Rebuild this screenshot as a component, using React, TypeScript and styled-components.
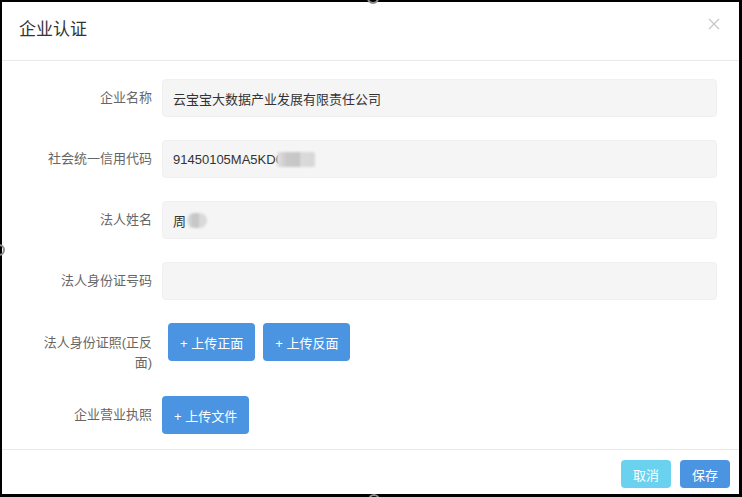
import React from 'react';
import styled, { createGlobalStyle } from 'styled-components';

const GlobalStyle = createGlobalStyle`
  html, body {
    margin: 0;
    padding: 0;
    background: #000;
  }
  body {
    font-family: "Liberation Sans", "Noto Sans CJK SC", sans-serif;
  }
`;

const Frame = styled.div`
  padding: 2px 3px 3px 2px;
`;

const Modal = styled.div`
  width: 737px;
  height: 492px;
  background: #fff;
  display: flex;
  flex-direction: column;
  box-sizing: border-box;
`;

const Header = styled.div`
  height: 59px;
  box-sizing: border-box;
  border-bottom: 1px solid #e9e9e9;
  padding: 16px 19px 0 17px;
  display: flex;
  justify-content: space-between;
  align-items: flex-start;
`;

const Title = styled.h3`
  margin: 0;
  font-size: 17px;
  line-height: 24px;
  font-weight: normal;
  color: #333;
`;

const Close = styled.button`
  border: none;
  background: none;
  padding: 0;
  width: 12px;
  height: 12px;
  display: flex;
  cursor: pointer;
`;

const Body = styled.div`
  height: 388px;
  box-sizing: border-box;
  padding: 18px 22px 0 0;
  display: flex;
  flex-direction: column;
  gap: 23px;
`;

const Row = styled.div<{ $align?: string }>`
  display: grid;
  grid-template-columns: 150px 1fr;
  column-gap: 10px;
  align-items: ${({ $align }) => $align || 'center'};
`;

const Label = styled.div<{ $top?: number }>`
  justify-self: end;
  width: 116px;
  text-align: right;
  font-size: 13px;
  line-height: 20px;
  color: #666;
  padding-top: ${({ $top }) => ($top ? `${$top}px` : '0')};
`;

const Field = styled.div`
  height: 38px;
  box-sizing: border-box;
  background: #f5f5f5;
  border: 1px solid #f0f0f0;
  border-radius: 4px;
  padding: 0 10px;
  display: flex;
  align-items: center;
  font-size: 13px;
  color: #333;
  white-space: nowrap;
`;

const Blur = styled.span<{ $w: number; $round?: boolean; $shift?: number }>`
  display: inline-block;
  width: ${({ $w }) => $w}px;
  height: 15px;
  margin-left: ${({ $shift }) => ($shift ? `${$shift}px` : '0')};
  border-radius: ${({ $round }) => ($round ? '8px' : '2px')};
  background: linear-gradient(90deg, #e2e2e2 0%, #c9c9c9 25%, #c6c6c6 60%, #dadada 62%, #d8d8d8 100%);
  filter: blur(0.8px);
`;

const Buttons = styled.div<{ $offset?: number }>`
  display: flex;
  gap: 8px;
  margin-left: ${({ $offset }) => ($offset ? `${$offset}px` : '0')};
`;

const UploadButton = styled.button`
  height: 38px;
  padding: 0 12px;
  border: none;
  border-radius: 4px;
  background: #4a94e2;
  color: #fff;
  font-family: inherit;
  font-size: 13px;
  cursor: pointer;
`;

const Footer = styled.div`
  flex: 1;
  border-top: 1px solid #e9e9e9;
  padding: 10px 9px 0 0;
  display: flex;
  justify-content: flex-end;
  align-items: flex-start;
  gap: 9px;
`;

const FooterButton = styled.button<{ $bg: string }>`
  height: 28px;
  padding: 0 12px;
  border: none;
  border-radius: 4px;
  background: ${({ $bg }) => $bg};
  color: #fff;
  font-family: inherit;
  font-size: 13px;
  cursor: pointer;
`;

const Handle = styled.span<{ $x: number; $y: number }>`
  position: fixed;
  left: ${({ $x }) => $x - 6}px;
  top: ${({ $y }) => $y - 6}px;
  width: 12px;
  height: 12px;
  box-sizing: border-box;
  border: 2px solid #8c8c8c;
  border-radius: 50%;
`;

const CloseIcon = () => (
  <svg width="12" height="12" viewBox="0 0 12 12">
    <path d="M1 1 L11 11 M11 1 L1 11" stroke="#c6c6c6" strokeWidth="1.2" fill="none" />
  </svg>
);

export default function App() {
  return (
    <>
      <GlobalStyle />
      <Frame>
        <Modal>
          <Header>
            <Title>企业认证</Title>
            <Close aria-label="关闭">
              <CloseIcon />
            </Close>
          </Header>
          <Body>
            <Row>
              <Label>企业名称</Label>
              <Field>云宝宝大数据产业发展有限责任公司</Field>
            </Row>
            <Row>
              <Label>社会统一信用代码</Label>
              <Field>
                91450105MA5KD0
                <Blur $w={38} $shift={-6} />
              </Field>
            </Row>
            <Row>
              <Label>法人姓名</Label>
              <Field>
                周<Blur $w={20} $round $shift={1} />
              </Field>
            </Row>
            <Row>
              <Label>法人身份证号码</Label>
              <Field />
            </Row>
            <Row $align="start">
              <Label $top={10}>法人身份证照(正反面)</Label>
              <Buttons $offset={6}>
                <UploadButton>+ 上传正面</UploadButton>
                <UploadButton>+ 上传反面</UploadButton>
              </Buttons>
            </Row>
            <Row>
              <Label>企业营业执照</Label>
              <Buttons>
                <UploadButton>+ 上传文件</UploadButton>
              </Buttons>
            </Row>
          </Body>
          <Footer>
            <FooterButton $bg="#6ad2ef">取消</FooterButton>
            <FooterButton $bg="#4a94e2">保存</FooterButton>
          </Footer>
        </Modal>
      </Frame>
      <Handle $x={373} $y={-2} />
      <Handle $x={-1} $y={250} />
      <Handle $x={374} $y={500} />
    </>
  );
}
